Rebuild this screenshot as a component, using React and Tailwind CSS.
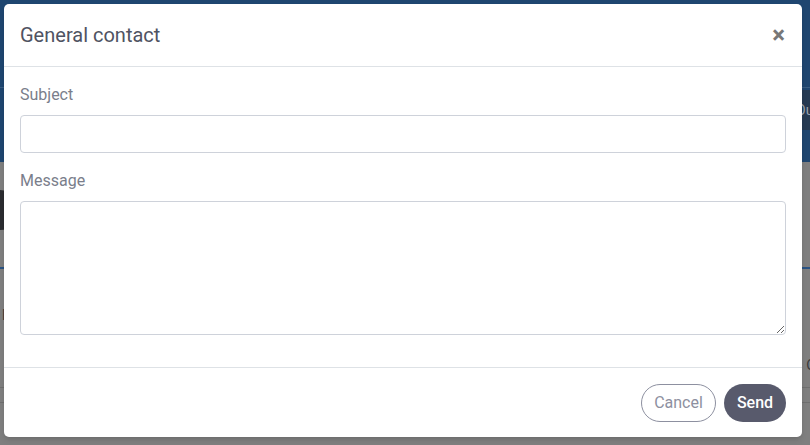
import React from 'react';

const App = () => {
    return (
        <div className="relative w-[810px] h-[445px] overflow-hidden bg-[#7f7f7f] font-['Roboto',sans-serif]">
            {/* page behind the backdrop */}
            <div className="h-[162px] bg-[#1f4670] flex flex-col">
                <div className="h-[88px] border-b border-[#3a5d83]" />
                <div className="flex justify-end">
                    <div className="w-[40px] h-[40px] mr-[-20px] mt-[2px] rounded-l-md bg-[#263a52] text-[#9aa3ae] text-sm flex items-center pl-[6px]">Ou</div>
                </div>
            </div>
            <div className="flex flex-col">
                <div className="ml-[-20px] mt-[28px] w-[40px] h-[40px] rounded-full bg-[#2b2c30]" />
                <div className="mt-[37px] h-[2px] bg-[#2a5384]" />
                <div className="mt-[36px] pl-[2px] text-[#3a3a3a] text-sm">E</div>
                <div className="mt-[30px] flex justify-between text-[#3a3a3a] text-sm">
                    <span className="ml-[-4px]">i</span>
                    <span className="mr-[-6px]">O</span>
                </div>
                <div className="mt-[12px] h-px bg-[#6f6f6f]" />
                <div className="mt-[14px] h-px bg-[#6f6f6f]" />
            </div>

            {/* modal */}
            <div className="absolute left-[4px] top-[4px] w-[798px] h-[433px] bg-white rounded-[5px] shadow-md flex flex-col">
                <div className="h-[63px] flex items-center justify-between px-4 border-b border-[#dee2e6]">
                    <h2 className="text-[20px] text-[#4f5362]">General contact</h2>
                    <button className="text-[#777] text-[24px] font-bold leading-none mr-[1px]">×</button>
                </div>
                <div className="flex-1 px-4 pt-[16px]">
                    <label className="block text-[16px] leading-6 text-[#7a7e8b]">Subject</label>
                    <input type="text" className="block mt-2 w-full h-[38px] border border-[#ced2da] rounded-[4px]" />
                    <label className="block mt-4 text-[16px] leading-6 text-[#7a7e8b]">Message</label>
                    <textarea className="block mt-2 w-full h-[134px] border border-[#ced2da] rounded-[4px]" />
                </div>
                <div className="h-[70px] border-t border-[#dee2e6] flex items-center justify-end gap-2 px-4">
                    <button className="h-[38px] w-[75px] rounded-full border border-[#8d90a0] text-[#8d90a0] text-[16px]">Cancel</button>
                    <button className="h-[38px] w-[62px] rounded-full bg-[#585a6c] text-white text-[16px] font-medium">Send</button>
                </div>
            </div>
        </div>
    );
};

export default App;
